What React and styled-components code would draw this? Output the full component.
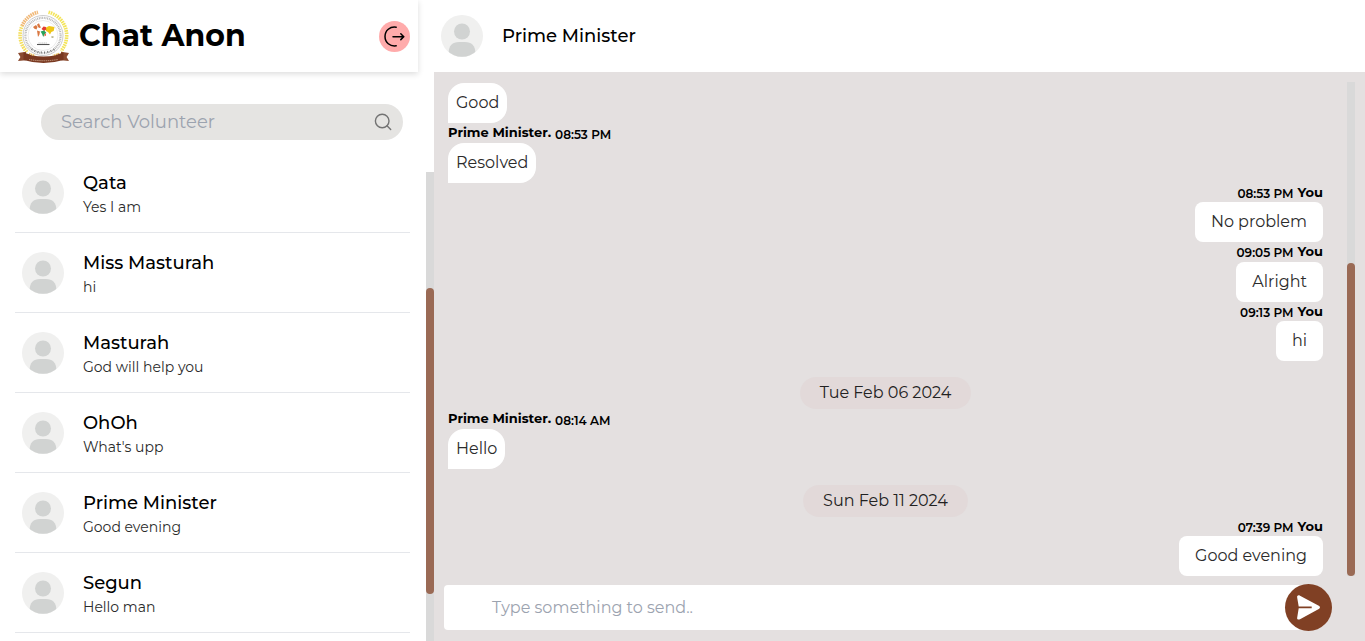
import React from "react";
import styled, { createGlobalStyle } from "styled-components";

const GlobalStyle = createGlobalStyle`
  * { box-sizing: border-box; }
  body {
    margin: 0;
    overflow: hidden;
    background: #fff;
    color: #000;
    font-family: Montserrat, Inter, "Liberation Sans", sans-serif;
  }
`;

const Page = styled.div`
  display: grid;
  grid-template-columns: 434px 1fr;
  height: 641px;
`;
const Sidebar = styled.aside`
  display: flex;
  flex-direction: column;
  height: 641px;
  overflow: hidden;
`;
const Brand = styled.header`
  display: flex;
  align-items: center;
  flex: none;
  width: 418px;
  height: 72px;
  padding: 0 8px 0 17px;
  box-shadow: 0 2px 6px rgba(0, 0, 0, 0.14);
`;
const BrandName = styled.h1`
  flex: 1;
  margin: 0 0 0 9px;
  font-size: 30px;
  line-height: 40px;
  font-weight: 700;
  white-space: nowrap;
`;
const Logout = styled.button`
  display: grid;
  place-items: center;
  width: 31px;
  height: 31px;
  padding: 0;
  border: 0;
  border-radius: 50%;
  background: #ffabab;
`;
const Search = styled.label`
  display: flex;
  align-items: center;
  justify-content: space-between;
  flex: none;
  width: 362px;
  height: 36px;
  margin: 32px 0 32px 41px;
  padding: 0 11px 0 20px;
  border-radius: 18px;
  background: #e5e4e2;
`;
const Hint = styled.span`
  color: #9ca3af;
  font-size: ${(p) => p.$size}px;
  line-height: 24px;
  white-space: nowrap;
`;
const ListPane = styled.div`
  display: flex;
  justify-content: space-between;
  flex: 1;
  min-height: 0;
`;
const List = styled.div`
  width: 395px;
  margin-left: 15px;
  overflow: hidden;
`;
const Row = styled.div`
  display: flex;
  gap: 19px;
  height: 80px;
  margin-top: ${(p) => (p.$first ? "-19px" : "0")};
  padding: 19px 0 0 7px;
  border-bottom: 1px solid #e5e7eb;
`;
const RowText = styled.div`
  display: flex;
  flex-direction: column;
`;
const Name = styled.span`
  font-size: 18px;
  line-height: 22px;
  font-weight: 500;
  white-space: nowrap;
`;
const Preview = styled.span`
  margin-top: 3px;
  font-size: 14px;
  line-height: 20px;
  font-weight: 400;
  color: #2b2b2b;
  white-space: nowrap;
`;
const Track = styled.div`
  flex: none;
  width: 8px;
  height: ${(p) => p.$height};
  padding-top: ${(p) => p.$offset}px;
  background: #d9d9d9;
`;
const Thumb = styled.div`
  height: ${(p) => p.$length}px;
  border-radius: 4px;
  background: #9a6a55;
`;
const Chat = styled.main`
  display: flex;
  flex-direction: column;
  height: 641px;
  background: #e4e0e0;
`;
const ChatHeader = styled.header`
  display: flex;
  align-items: center;
  gap: 19px;
  flex: none;
  height: 72px;
  padding-left: 7px;
  background: #fff;
`;
const Conversation = styled.section`
  display: flex;
  justify-content: space-between;
  height: 494px;
  margin: 10px 10px 0 14px;
`;
const Messages = styled.div`
  display: flex;
  flex-direction: column;
  width: 875px;
  padding-top: 1px;
`;
const Message = styled.article`
  display: flex;
  flex-direction: column;
  align-items: ${(p) => (p.$mine ? "flex-end" : "flex-start")};
`;
const Meta = styled.div`
  display: flex;
  gap: 4px;
  height: ${(p) => p.$height}px;
  white-space: nowrap;
`;
const Sender = styled.strong`
  font-size: 13px;
  line-height: 19px;
  font-weight: 700;
`;
const Time = styled.span`
  padding-top: ${(p) => (p.$mine ? 1 : 2)}px;
  font-size: 12px;
  line-height: 19px;
  font-weight: 600;
`;
const Bubble = styled.div`
  height: 40px;
  padding: 0 ${(p) => (p.$mine ? 16 : 8)}px;
  border-radius: ${(p) => (p.$mine ? "8px" : "16px 16px 16px 0")};
  background: #fff;
  color: #2b2b2b;
  font-size: 16px;
  line-height: 39px;
  font-weight: 400;
  white-space: nowrap;
`;
const DatePill = styled.time`
  align-self: center;
  height: 32px;
  margin-top: 16px;
  padding: 0 20px;
  border-radius: 16px;
  background: #e2d9d9;
  color: #222;
  font-size: 16px;
  line-height: 31px;
  font-weight: 400;
  white-space: nowrap;
`;
const Composer = styled.form`
  display: flex;
  align-items: center;
  height: 47px;
  margin: 8px 33px 0 10px;
`;
const Field = styled.div`
  display: flex;
  align-items: center;
  flex: 1;
  height: 45px;
  margin-right: -24px;
  padding-left: 48px;
  border-radius: 4px;
  background: #fff;
`;
const Send = styled.button`
  display: grid;
  place-items: center;
  z-index: 1;
  width: 47px;
  height: 47px;
  padding: 0;
  border: 0;
  border-radius: 50%;
  background: #804024;
`;

const Avatar = () => (
  <svg width="42" height="42" viewBox="0 0 42 42">
    <defs>
      <clipPath id="face"><circle cx="21" cy="21" r="20.8" /></clipPath>
    </defs>
    <circle cx="21" cy="21" r="21" fill="#f0f0ef" />
    <g clipPath="url(#face)" fill="#d1d3d2">
      <circle cx="21" cy="16.5" r="8" />
      <path d="M7.5 42V38Q8 27 18 27H24Q34 27 34.5 38V42Z" />
    </g>
  </svg>
);

const Logo = () => (
  <svg width="53" height="55" viewBox="0 0 53 55">
    <g fill="none" strokeWidth="3.6">
      <path d="M5 17A23.5 23.5 0 0 1 21 3.2" stroke="#f0b878" strokeDasharray="1.6 .7" />
      <path d="M10 43A23.5 23.5 0 0 1 5 17" stroke="#f4df63" strokeDasharray="1.6 .9" />
      <path d="M31.5 3.2A24 24 0 0 1 44 42" stroke="#f3e45a" strokeDasharray="1.6 .8" />
      <path d="M12 45L18 47M42 45L36 47" stroke="#e8b64d" strokeWidth="2.4" strokeDasharray="1.4 .6" />
    </g>
    <circle cx="26" cy="26.5" r="20" fill="#fff" stroke="#a9a9a9" strokeWidth=".6" />
    <circle cx="26" cy="26.5" r="17.6" fill="none" stroke="#b4b4b4" strokeWidth="2.2" strokeDasharray=".9 .8" />
    <circle cx="26" cy="26.5" r="15" fill="#fff" stroke="#d6d6d6" strokeWidth=".5" />
    <path d="M16 18l3-2 1.5 2-1 2.5-2-.8zM20 15.5l2-1.3 1 2.6 1 1.6-2 .6-1.2-1.6zM20 21.5l3 1-.6 3.2-1.4 2.2z" fill="#d97842" />
    <path d="M29 18.5l3-1.5 5.5 1-.8 4-2.4 1-1.3 2.6-2-2.6-2-1z" fill="#efc619" />
    <path d="M24.5 20l2-2.5 2.4.5.4 2.6-2.2 1.4z" fill="#e23b32" />
    <path d="M23.6 22.6l3.4-1 2.2 2-1.6 1.6-1.4 2.8-1-2.8z" fill="#28a35c" />
    <path d="M27.5 25.2l1.6-1.2-.3 2.2-1.3 1.4z" fill="#e95738" />
    <path d="M34.5 27l2.3.5-.6 1.6-1.8-.4z" fill="#b9b384" />
    <path d="M20 35.5h12.5" stroke="#555" strokeWidth="1.1" />
    <path d="M21.5 34h9" stroke="#aaa" strokeWidth=".7" strokeDasharray="1.2 .6" />
    <path d="M14.5 40Q26 47 38 40" fill="none" stroke="#777" strokeWidth="2" strokeDasharray="1 2.3" />
    <path d="M1 44l8-1.2v8.4L1 52l2.4-4zM52 44l-8-1.2v8.4l8 .8-2.4-4z" fill="#8b4b30" />
    <path d="M6.500 43.500Q12 45 15 46.500Q26.500 48.500 38 46.500Q41 45 46.500 43.500V51Q26.500 57 6.500 51Z" fill="#793820" />
    <path d="M12 50.500Q26.500 53 41 50.500" fill="none" stroke="#cda78f" strokeWidth="1" strokeDasharray="1.2 .7" />
  </svg>
);

const LogoutIcon = () => (
  <svg width="23" height="23" viewBox="0 0 23 23" fill="none" stroke="#000" strokeWidth="1.5" strokeLinecap="round">
    <path d="M13.2 2.2C7 1.2 2 5.6 2 11.5S7 21.8 13.2 20.8" />
    <path d="M10 11.7H20.5M17.8 8.8L20.7 11.7L17.8 14.6" />
  </svg>
);
const SearchIcon = () => (
  <svg width="18" height="18" viewBox="0 0 18 18" fill="none" stroke="#737373" strokeWidth="1.4" strokeLinecap="round">
    <circle cx="8.2" cy="8" r="6.8" />
    <path d="M13 12.8L16.7 16.5" />
  </svg>
);
const SendIcon = () => (
  <svg width="27" height="27" viewBox="0 0 27 27">
    <path d="M2.2 3.7C1.7 1.8 3.2.8 5 1.7L23.8 11.7C25.4 12.6 25.4 14 23.8 14.9L5 25.2C3.2 26.2 1.7 25.2 2.2 23.4L3.7 14.2H16.7V12.4H3.7Z" fill="#fff" />
  </svg>
);

const people = [
  ["Qata", "Yes I am"],
  ["Miss Masturah", "hi"],
  ["Masturah", "God will help you"],
  ["OhOh", "What's upp"],
  ["Prime Minister", "Good evening"],
  ["Segun", "Hello man"],
];

const thread = [
  { text: "Good" },
  { text: "Resolved", time: "08:53 PM", meta: 20 },
  { mine: true, text: "No problem", time: "08:53 PM", meta: 19 },
  { mine: true, text: "Alright", time: "09:05 PM", meta: 20 },
  { mine: true, text: "hi", time: "09:13 PM", meta: 19 },
  { date: "Tue Feb 06 2024" },
  { text: "Hello", time: "08:14 AM", meta: 20 },
  { date: "Sun Feb 11 2024" },
  { mine: true, text: "Good evening", time: "07:39 PM", meta: 19 },
];

function Entry({ item }) {
  if (item.date) return <DatePill>{item.date}</DatePill>;
  const time = <Time $mine={item.mine}>{item.time}</Time>;
  return (
    <Message $mine={item.mine}>
      {item.time && (
        <Meta $height={item.meta}>
          {item.mine ? <>{time}<Sender>You</Sender></> : <><Sender>Prime Minister.</Sender>{time}</>}
        </Meta>
      )}
      <Bubble $mine={item.mine}>{item.text}</Bubble>
    </Message>
  );
}

export default function App() {
  return (
    <>
      <GlobalStyle />
      <Page>
        <Sidebar>
          <Brand>
            <Logo />
            <BrandName>Chat Anon</BrandName>
            <Logout aria-label="Log out"><LogoutIcon /></Logout>
          </Brand>
          <Search>
            <Hint $size={18}>Search Volunteer</Hint>
            <SearchIcon />
          </Search>
          <ListPane>
            <List>
              {people.map(([name, preview], i) => (
                <Row key={name} $first={i === 0}>
                  <Avatar />
                  <RowText>
                    <Name>{name}</Name>
                    <Preview>{preview}</Preview>
                  </RowText>
                </Row>
              ))}
            </List>
            <Track $height="469px" $offset={116}><Thumb $length={306} /></Track>
          </ListPane>
        </Sidebar>
        <Chat>
          <ChatHeader>
            <Avatar />
            <Name>Prime Minister</Name>
          </ChatHeader>
          <Conversation>
            <Messages>
              {thread.map((item, i) => <Entry key={i} item={item} />)}
            </Messages>
            <Track $height="494px" $offset={181}><Thumb $length={313} /></Track>
          </Conversation>
          <Composer>
            <Field><Hint $size={16}>Type something to send..</Hint></Field>
            <Send type="button" aria-label="Send"><SendIcon /></Send>
          </Composer>
        </Chat>
      </Page>
    </>
  );
}
